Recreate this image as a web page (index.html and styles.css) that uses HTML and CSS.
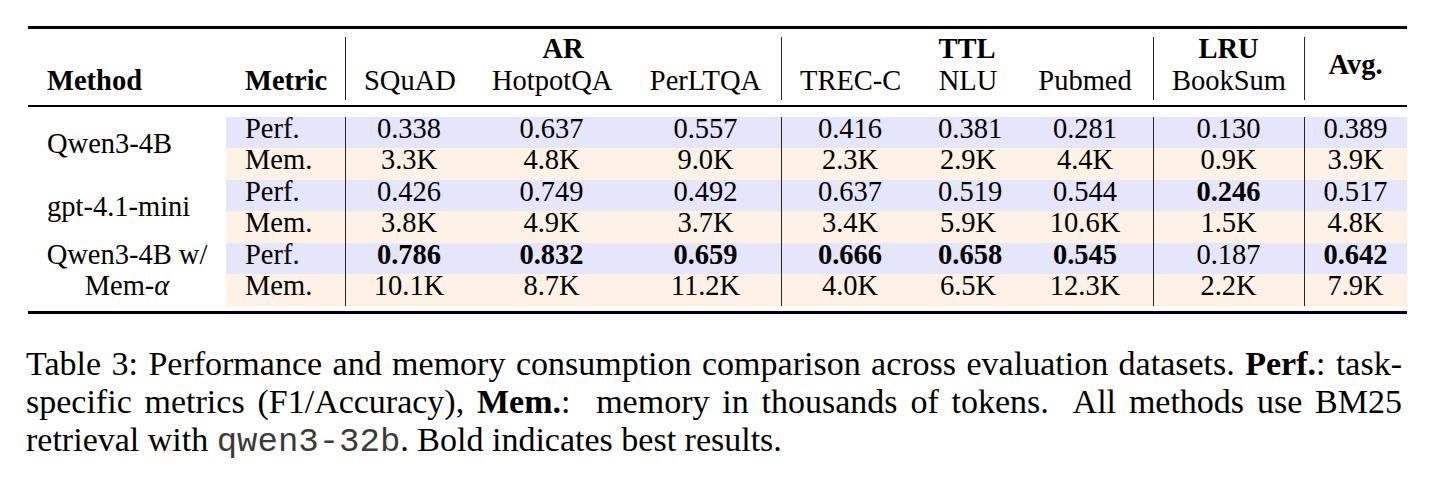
FILE: index.html
```html
<!DOCTYPE html>
<html lang="en">
<head>
<meta charset="utf-8">
<title>Table 3</title>
<link rel="stylesheet" href="styles.css">
</head>
<body>
<div class="page">
  <table class="results">
    <colgroup>
      <col class="c-method">
      <col class="c-metric">
      <col class="c-squad">
      <col class="c-hotpot">
      <col class="c-perltqa">
      <col class="c-trec">
      <col class="c-nlu">
      <col class="c-pubmed">
      <col class="c-booksum">
      <col class="c-avg">
    </colgroup>
    <thead>
      <tr class="gap gap-top"><td colspan="10"></td></tr>
      <tr class="hd">
        <th></th>
        <th></th>
        <th colspan="3" class="vl b">AR</th>
        <th colspan="3" class="vl b">TTL</th>
        <th class="vl b">LRU</th>
        <th rowspan="2" class="vl b">Avg.</th>
      </tr>
      <tr class="hd">
        <th class="left b">Method</th>
        <th class="left b">Metric</th>
        <th class="vl">SQuAD</th>
        <th>HotpotQA</th>
        <th>PerLTQA</th>
        <th class="vl">TREC-C</th>
        <th>NLU</th>
        <th>Pubmed</th>
        <th class="vl">BookSum</th>
      </tr>
      <tr class="gap gap-above"><td colspan="10"></td></tr>
      <tr class="rule"><td colspan="10"></td></tr>
      <tr class="gap gap-below"><td colspan="10"></td></tr>
    </thead>
    <tbody>
      <tr class="perf">
        <td rowspan="2" class="method">Qwen3-4B</td>
        <td class="metric">Perf.</td>
        <td class="vl">0.338</td><td>0.637</td><td>0.557</td>
        <td class="vl">0.416</td><td>0.381</td><td>0.281</td>
        <td class="vl">0.130</td>
        <td class="vl">0.389</td>
      </tr>
      <tr class="mem">
        <td class="metric">Mem.</td>
        <td class="vl">3.3K</td><td>4.8K</td><td>9.0K</td>
        <td class="vl">2.3K</td><td>2.9K</td><td>4.4K</td>
        <td class="vl">0.9K</td>
        <td class="vl">3.9K</td>
      </tr>
      <tr class="perf">
        <td rowspan="2" class="method">gpt-4.1-mini</td>
        <td class="metric">Perf.</td>
        <td class="vl">0.426</td><td>0.749</td><td>0.492</td>
        <td class="vl">0.637</td><td>0.519</td><td>0.544</td>
        <td class="vl b">0.246</td>
        <td class="vl">0.517</td>
      </tr>
      <tr class="mem">
        <td class="metric">Mem.</td>
        <td class="vl">3.8K</td><td>4.9K</td><td>3.7K</td>
        <td class="vl">3.4K</td><td>5.9K</td><td>10.6K</td>
        <td class="vl">1.5K</td>
        <td class="vl">4.8K</td>
      </tr>
      <tr class="perf">
        <td rowspan="2" class="method stack">
          <div class="stack-line">Qwen3-4B w/</div>
          <div class="stack-line">Mem-<i class="alpha">α</i></div>
        </td>
        <td class="metric">Perf.</td>
        <td class="vl b">0.786</td><td class="b">0.832</td><td class="b">0.659</td>
        <td class="vl b">0.666</td><td class="b">0.658</td><td class="b">0.545</td>
        <td class="vl">0.187</td>
        <td class="vl b">0.642</td>
      </tr>
      <tr class="mem">
        <td class="metric">Mem.</td>
        <td class="vl">10.1K</td><td>8.7K</td><td>11.2K</td>
        <td class="vl">4.0K</td><td>6.5K</td><td>12.3K</td>
        <td class="vl">2.2K</td>
        <td class="vl">7.9K</td>
      </tr>
      <tr class="gap gap-bottom"><td colspan="10"></td></tr>
    </tbody>
  </table>

  <div class="caption">
    <span class="line">Table 3: Performance and memory consumption comparison across evaluation datasets. <b>Perf.</b>: task-</span>
    <span class="line">specific metrics (F1/Accuracy), <b>Mem.</b>:&nbsp; memory in thousands of tokens.&nbsp; All methods use BM25</span>
    <span class="line last">retrieval with <code>qwen3-32b</code>. Bold indicates best results.</span>
  </div>
</div>
</body>
</html>
```
FILE: styles.css
```css
* {
  box-sizing: border-box;
}

html,
body {
  margin: 0;
  background: #ffffff;
}

body {
  font-family: "Liberation Serif", "Times New Roman", serif;
  color: #000000;
}

.page {
  padding-top: 26px;
}

/* ---------- table ---------- */

.results {
  margin-left: 28px;
  width: 1379px;
  table-layout: fixed;
  border-collapse: separate;
  border-spacing: 0;
  border-top: 3px solid #000000;
  border-bottom: 3px solid #000000;
  font-size: 28.5px;
}

.c-method { width: 198px; }
.c-metric { width: 119px; }
.c-squad { width: 128px; }
.c-hotpot { width: 157px; }
.c-perltqa { width: 151px; }
.c-trec { width: 138px; }
.c-nlu { width: 98px; }
.c-pubmed { width: 136px; }
.c-booksum { width: 151px; }
.c-avg { width: 103px; }

.results th,
.results td {
  padding: 0 19px 7.5px;
  height: 31.4px;
  line-height: 24px;
  text-align: center;
  vertical-align: middle;
  white-space: nowrap;
  font-weight: normal;
}

.results .hd th {
  height: 31.5px;
}

.results .left {
  text-align: left;
}

.results .b {
  font-weight: bold;
}

.results .vl {
  box-shadow: inset 1px 0 0 #262626;
}

/* spacer rows and rules */
.results .gap td,
.results .rule td {
  padding: 0;
  line-height: 0;
  font-size: 0;
}

.results .gap-top td { height: 8px; }
.results .gap-above td { height: 5px; }
.results .rule td { height: 2px; background: #000000; }
.results .gap-below td { height: 9.7px; }
.results .gap-bottom td { height: 5px; }

/* body rows */
.results .perf td {
  background: #e5e5fb;
}

.results .mem td {
  background: #fef1e5;
}

.results td.method {
  background: #ffffff;
  text-align: left;
}

.results td.metric {
  text-align: left;
}

.results td.stack {
  text-align: center;
  padding: 0 10px;
}

.stack-line {
  height: 31.4px;
  line-height: 24px;
  padding-bottom: 7.4px;
}

.alpha {
  font-style: italic;
}

/* ---------- caption ---------- */

.caption {
  margin: 31.5px 0 0 26px;
  width: 1376px;
  font-size: 34px;
  line-height: 37.8px;
}

.caption .line {
  display: block;
  text-align: justify;
  text-align-last: justify;
}

.caption .line.last {
  text-align: left;
  text-align-last: left;
}

.caption code {
  font-family: "Liberation Mono", "Courier New", monospace;
  font-size: 34px;
  color: #3a3a3a;
}
```
